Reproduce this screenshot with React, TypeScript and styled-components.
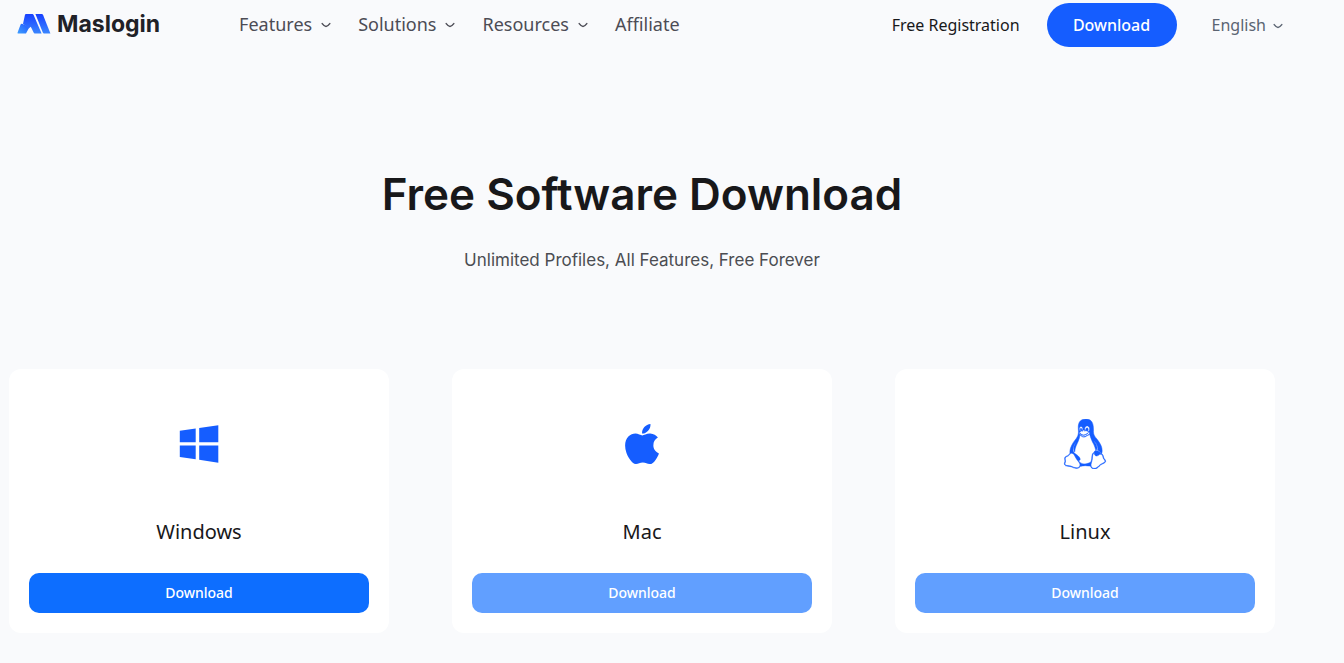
import React from "react";
import styled, { createGlobalStyle } from "styled-components";
import { FaApple, FaLinux } from "react-icons/fa";

const GlobalStyle = createGlobalStyle`
  *, *::before, *::after { box-sizing: border-box; }
  body {
    margin: 0;
    background: #f9fafc;
    color: #18181a;
    font-family: "Noto Sans", "Open Sans", sans-serif;
  }
  h1, h2, p, ul { margin: 0; padding: 0; }
  button { font-family: inherit; cursor: pointer; }
`;

const Header = styled.header`
  display: flex;
  align-items: center;
  height: 50px;
  padding: 0 61px 0 17px;
`;

const Brand = styled.a`
  display: flex;
  align-items: center;
  gap: 6px;
  margin-right: 79px;
  padding-bottom: 3px;
  color: #202127;
  font: 700 23px/28px Inter, sans-serif;
  text-decoration: none;
`;

const Nav = styled.nav`
  display: flex;
  align-items: center;
  gap: 27px;
  flex: 1;
  padding-bottom: 2px;
`;

const NavButton = styled.button`
  display: flex;
  align-items: center;
  gap: 9px;
  padding: 0;
  border: 0;
  background: none;
  color: #4c4c55;
  font-size: 18px;
  line-height: 24px;
`;

const NavLink = styled.a`
  color: #4c4c55;
  font-size: 18px;
  line-height: 24px;
  text-decoration: none;
`;

const Actions = styled.div`
  display: flex;
  align-items: center;
  gap: 27px;
`;

const RegisterLink = styled.a`
  color: #18181a;
  font-size: 16px;
  line-height: 24px;
  text-decoration: none;
`;

const HeaderDownload = styled.button`
  width: 130px;
  height: 44px;
  border: 0;
  border-radius: 22px;
  background: #155dff;
  color: #fff;
  font-size: 16px;
  font-weight: 500;
  line-height: 24px;
`;

const LanguageButton = styled.button`
  display: flex;
  align-items: center;
  gap: 7px;
  margin-left: 8px;
  padding: 0;
  border: 0;
  background: none;
  color: #5b6472;
  font-size: 16px;
  line-height: 24px;
`;

const Main = styled.main`
  padding: 116px 69px 30px 9px;
`;

const Hero = styled.section`
  display: flex;
  flex-direction: column;
  align-items: center;
  gap: 26px;
  margin-bottom: 97px;
  text-align: center;
`;

const Title = styled.h1`
  color: #18181a;
  font: 600 44px/56px Inter, sans-serif;
`;

const Subtitle = styled.p`
  color: #4b4d52;
  font: 400 17px/24px Inter, sans-serif;
`;

const Cards = styled.ul`
  display: grid;
  grid-template-columns: repeat(3, 1fr);
  gap: 63px;
  list-style: none;
`;

const Card = styled.li`
  display: flex;
  flex-direction: column;
  align-items: center;
  padding: 50px 20px 20px;
  border-radius: 12px;
  background: #fff;
`;

const IconBox = styled.div`
  display: flex;
  align-items: center;
  justify-content: center;
  height: 50px;
  color: #155dff;
`;

const Platform = styled.h2`
  margin: 48px 0 26px;
  font-size: 20px;
  font-weight: 400;
  line-height: 30px;
`;

const CardDownload = styled.button`
  width: 100%;
  height: 40px;
  border: 0;
  border-radius: 10px;
  background: #0d6eff;
  color: #fff;
  font-size: 14px;
  font-weight: 500;
  line-height: 20px;

  &:disabled {
    background: #619fff;
    cursor: default;
  }
`;

const ChevronIcon = styled.svg`
  width: 10px;
  height: 6px;
  margin-top: 2px;
`;

function Chevron() {
  return (
    <ChevronIcon viewBox="0 0 10 6" fill="none" aria-hidden="true">
      <path d="M1.2 1.6Q3.6 4.6 5 4.6Q6.4 4.6 8.8 1.6" stroke="currentColor" strokeWidth="1.5" strokeLinecap="round" />
    </ChevronIcon>
  );
}

function LogoMark() {
  return (
    <svg width="34" height="20" viewBox="0 0 34 20" aria-hidden="true">
      <defs>
        <linearGradient id="mark" x1="0" y1="0" x2="0" y2="1">
          <stop offset="0" stopColor="#1740ff" />
          <stop offset="1" stopColor="#3a86ff" />
        </linearGradient>
        <linearGradient id="markLeg" x1="1" y1="0" x2="0" y2="1">
          <stop offset="0" stopColor="#1f55ff" />
          <stop offset="1" stopColor="#3fa0ff" />
        </linearGradient>
      </defs>
      <path d="M3.6 10.4Q4 9.5 5 9.7L8 11L12.2 13.6L9 19.4H1Q0.2 19.4 0.6 18.4Z" fill="url(#markLeg)" />
      <path d="M9 0H15.4Q16.2 0 16.6 0.9L24.6 19.4H17.8Q17 19.4 16.6 18.5L13.8 12.8L11.6 14.4L6 9.8L8 0.8Q8.2 0 9 0Z" fill="url(#mark)" />
      <path d="M18.4 0H24.8Q25.7 0 26.1 0.9L33.4 19.4H27Q26.2 19.4 25.8 18.5Z" fill="url(#mark)" />
    </svg>
  );
}

function WindowsIcon() {
  return (
    <svg width="40" height="40" viewBox="0 0 40 40" fill="currentColor" aria-hidden="true">
      <path d="M0.8 6.7L16.7 4.5V18.2H0.8Z" />
      <path d="M20.2 3.9L39.3 1.2V18.2H20.2Z" />
      <path d="M0.8 21.5H16.7V35.2L0.8 32.9Z" />
      <path d="M20.2 21.5H39.3V38.7L20.2 35.7Z" />
    </svg>
  );
}

const menus = ["Features", "Solutions", "Resources"];

const platforms = [
  { name: "Windows", icon: <WindowsIcon />, available: true },
  { name: "Mac", icon: <FaApple size={46} />, available: false },
  { name: "Linux", icon: <FaLinux size={50} strokeWidth={5} />, available: false },
];

export default function App() {
  return (
    <>
      <GlobalStyle />
      <Header>
        <Brand href="#">
          <LogoMark />
          Maslogin
        </Brand>
        <Nav>
          {menus.map((name) => (
            <NavButton key={name} type="button">
              {name}
              <Chevron />
            </NavButton>
          ))}
          <NavLink href="#">Affiliate</NavLink>
        </Nav>
        <Actions>
          <RegisterLink href="#">Free Registration</RegisterLink>
          <HeaderDownload type="button">Download</HeaderDownload>
          <LanguageButton type="button">
            English
            <Chevron />
          </LanguageButton>
        </Actions>
      </Header>
      <Main>
        <Hero>
          <Title>Free Software Download</Title>
          <Subtitle>Unlimited Profiles, All Features, Free Forever</Subtitle>
        </Hero>
        <Cards>
          {platforms.map(({ name, icon, available }) => (
            <Card key={name}>
              <IconBox>{icon}</IconBox>
              <Platform>{name}</Platform>
              <CardDownload type="button" disabled={!available}>
                Download
              </CardDownload>
            </Card>
          ))}
        </Cards>
      </Main>
    </>
  );
}
